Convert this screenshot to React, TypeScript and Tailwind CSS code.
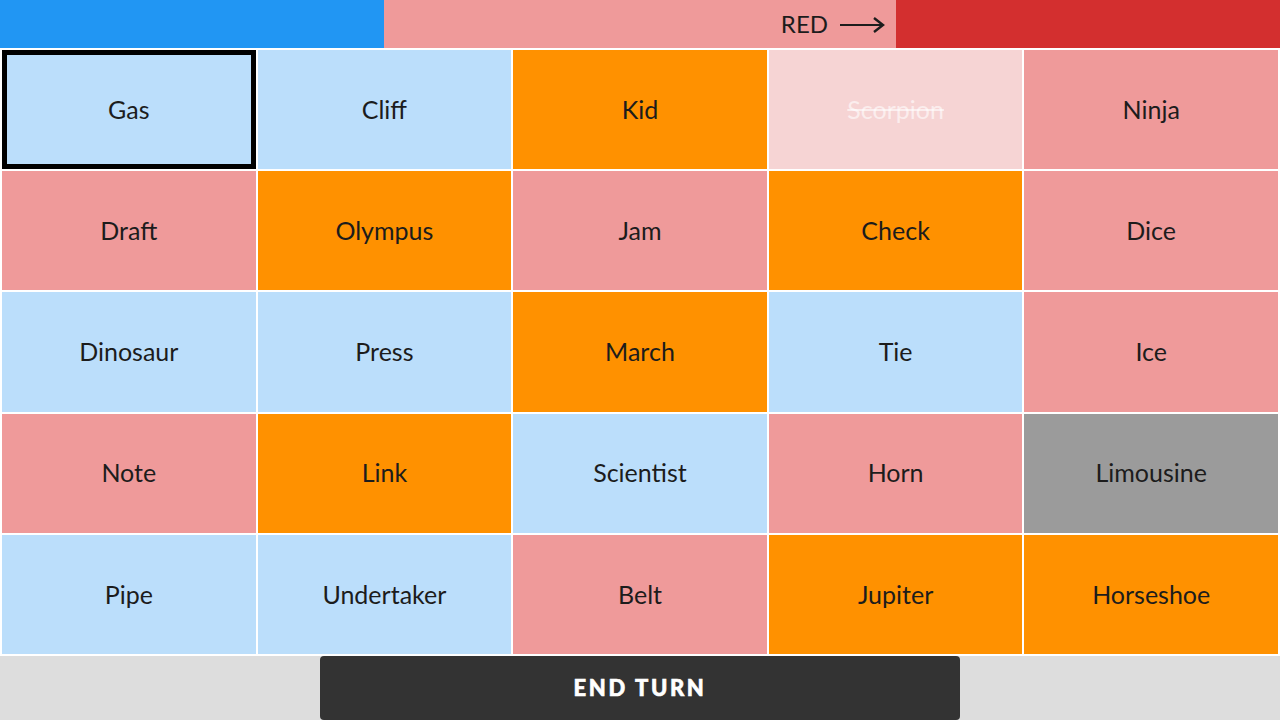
import React from "react";

type C = "b" | "o" | "p" | "g" | "x";
const cards: { w: string; c: C; sel?: boolean }[] = [
  { w: "Gas", c: "b", sel: true },
  { w: "Cliff", c: "b" },
  { w: "Kid", c: "o" },
  { w: "Scorpion", c: "x" },
  { w: "Ninja", c: "p" },
  { w: "Draft", c: "p" },
  { w: "Olympus", c: "o" },
  { w: "Jam", c: "p" },
  { w: "Check", c: "o" },
  { w: "Dice", c: "p" },
  { w: "Dinosaur", c: "b" },
  { w: "Press", c: "b" },
  { w: "March", c: "o" },
  { w: "Tie", c: "b" },
  { w: "Ice", c: "p" },
  { w: "Note", c: "p" },
  { w: "Link", c: "o" },
  { w: "Scientist", c: "b" },
  { w: "Horn", c: "p" },
  { w: "Limousine", c: "g" },
  { w: "Pipe", c: "b" },
  { w: "Undertaker", c: "b" },
  { w: "Belt", c: "p" },
  { w: "Jupiter", c: "o" },
  { w: "Horseshoe", c: "o" },
];

const bg: Record<C, string> = {
  b: "bg-[#bbdefb] text-[#1c1c1c]",
  o: "bg-[#ff9100] text-[#1c1c1c]",
  p: "bg-[#ef9a9a] text-[#1c1c1c]",
  g: "bg-[#9b9b9b] text-[#1c1c1c]",
  x: "bg-[#f6d4d4] text-white/60 line-through",
};

export default function App() {
  return (
    <div
      className="w-[1280px] h-[720px] flex flex-col bg-[#dddddd] overflow-hidden"
      style={{ fontFamily: "Lato, 'Open Sans', sans-serif" }}
    >
      <div className="h-[48px] flex shrink-0">
        <div className="w-[384px] bg-[#2196f3]" />
        <div className="w-[512px] bg-[#ef9a9a] flex items-center justify-end pr-[11px] gap-[11px] text-[24px] text-[#1c1c1c]">
          <span>RED</span>
          <svg width="46" height="20" viewBox="0 0 46 20" className="mt-[1px]">
            <path d="M1 10 H43" stroke="#1c1c1c" strokeWidth="2.2" fill="none" />
            <path d="M35 3 L44 10 L35 17" stroke="#1c1c1c" strokeWidth="2.4" fill="none" strokeLinejoin="miter" />
          </svg>
        </div>
        <div className="flex-1 bg-[#d32f2f]" />
      </div>
      <div className="h-[608px] bg-white p-[2px] grid grid-cols-5 grid-rows-5 gap-[2px] shrink-0">
        {cards.map((k) => (
          <div
            key={k.w}
            className={`${bg[k.c]} flex items-center justify-center text-[25px] ${
              k.sel ? "border-[5px] border-black" : ""
            }`}
          >
            {k.w}
          </div>
        ))}
      </div>
      <div className="flex-1 flex justify-center">
        <button className="w-[640px] h-full bg-[#333333] rounded-[4px] text-white font-black text-[22px] tracking-[0.12em] pb-[2px] [-webkit-text-stroke:0.6px_white]">
          END TURN
        </button>
      </div>
    </div>
  );
}
